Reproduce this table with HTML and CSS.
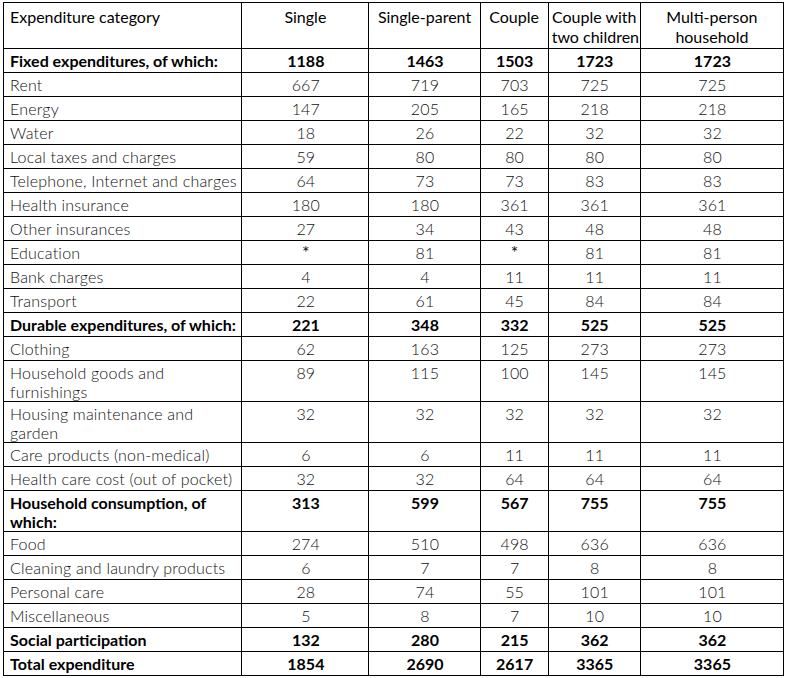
FILE: index.html
```html
<!DOCTYPE html>
<html lang="en">
<head>
<meta charset="utf-8">
<title>Expenditure table</title>
<link rel="stylesheet" href="styles.css">
</head>
<body>
<table class="exp">
  <colgroup>
    <col class="c-cat">
    <col class="c-single">
    <col class="c-sp">
    <col class="c-couple">
    <col class="c-cwc">
    <col class="c-multi">
  </colgroup>
  <thead>
    <tr class="head">
      <th class="cat">Expenditure category</th>
      <th>Single</th>
      <th>Single-parent</th>
      <th>Couple</th>
      <th>Couple with<br>two children</th>
      <th>Multi-person<br>household</th>
    </tr>
  </thead>
  <tbody>
    <tr class="b"><td class="cat">Fixed expenditures, of which:</td><td>1188</td><td>1463</td><td>1503</td><td>1723</td><td>1723</td></tr>
    <tr><td class="cat">Rent</td><td>667</td><td>719</td><td>703</td><td>725</td><td>725</td></tr>
    <tr><td class="cat">Energy</td><td>147</td><td>205</td><td>165</td><td>218</td><td>218</td></tr>
    <tr><td class="cat">Water</td><td>18</td><td>26</td><td>22</td><td>32</td><td>32</td></tr>
    <tr><td class="cat">Local taxes and charges</td><td>59</td><td>80</td><td>80</td><td>80</td><td>80</td></tr>
    <tr><td class="cat">Telephone, Internet and charges</td><td>64</td><td>73</td><td>73</td><td>83</td><td>83</td></tr>
    <tr><td class="cat">Health insurance</td><td>180</td><td>180</td><td>361</td><td>361</td><td>361</td></tr>
    <tr><td class="cat">Other insurances</td><td>27</td><td>34</td><td>43</td><td>48</td><td>48</td></tr>
    <tr><td class="cat">Education</td><td class="ast">*</td><td>81</td><td class="ast">*</td><td>81</td><td>81</td></tr>
    <tr><td class="cat">Bank charges</td><td>4</td><td>4</td><td>11</td><td>11</td><td>11</td></tr>
    <tr><td class="cat">Transport</td><td>22</td><td>61</td><td>45</td><td>84</td><td>84</td></tr>
    <tr class="b"><td class="cat">Durable expenditures, of which:</td><td>221</td><td>348</td><td>332</td><td>525</td><td>525</td></tr>
    <tr><td class="cat">Clothing</td><td>62</td><td>163</td><td>125</td><td>273</td><td>273</td></tr>
    <tr><td class="cat">Household goods and<br>furnishings</td><td>89</td><td>115</td><td>100</td><td>145</td><td>145</td></tr>
    <tr><td class="cat">Housing maintenance and<br>garden</td><td>32</td><td>32</td><td>32</td><td>32</td><td>32</td></tr>
    <tr><td class="cat">Care products (non-medical)</td><td>6</td><td>6</td><td>11</td><td>11</td><td>11</td></tr>
    <tr><td class="cat">Health care cost (out of pocket)</td><td>32</td><td>32</td><td>64</td><td>64</td><td>64</td></tr>
    <tr class="b"><td class="cat">Household consumption, of<br>which:</td><td>313</td><td>599</td><td>567</td><td>755</td><td>755</td></tr>
    <tr><td class="cat">Food</td><td>274</td><td>510</td><td>498</td><td>636</td><td>636</td></tr>
    <tr><td class="cat">Cleaning and laundry products</td><td>6</td><td>7</td><td>7</td><td>8</td><td>8</td></tr>
    <tr><td class="cat">Personal care</td><td>28</td><td>74</td><td>55</td><td>101</td><td>101</td></tr>
    <tr><td class="cat">Miscellaneous</td><td>5</td><td>8</td><td>7</td><td>10</td><td>10</td></tr>
    <tr class="b"><td class="cat">Social participation</td><td>132</td><td>280</td><td>215</td><td>362</td><td>362</td></tr>
    <tr class="b"><td class="cat">Total expenditure</td><td>1854</td><td>2690</td><td>2617</td><td>3365</td><td>3365</td></tr>
  </tbody>
</table>
</body>
</html>
```
FILE: styles.css
```css
html, body {
  margin: 0;
  padding: 0;
  background: #ffffff;
}

body {
  padding: 2px 0 0 3px;
  font-family: Lato, "Open Sans", "Liberation Sans", sans-serif;
  font-size: 16px;
  color: #111;
}

.exp {
  border-collapse: collapse;
  table-layout: fixed;
  width: 781px;
}

.c-cat { width: 238px; }
.c-single { width: 127px; }
.c-sp { width: 111px; }
.c-couple { width: 68px; }
.c-cwc { width: 92px; }
.c-multi { width: 143px; }

.exp th,
.exp td {
  border: 1px solid #000;
  padding: 2px 5px 0 6px;
  line-height: 19px;
  vertical-align: top;
  text-align: center;
  font-weight: 300;
  white-space: nowrap;
}

.exp td {
  letter-spacing: 0.2px;
}

.exp tbody tr {
  height: 24px;
}

.exp th {
  font-weight: 400;
  color: #000;
  padding: 4px 3px 0 3px;
  line-height: 20px;
  height: 46px;
  box-sizing: border-box;
}

.exp .cat {
  text-align: left;
  padding-left: 6px;
}

.exp tr.b td {
  font-weight: 700;
  color: #000;
  letter-spacing: 0;
}

.exp td.ast {
  font-size: 18px;
  font-weight: 400;
  line-height: 19px;
}
```
